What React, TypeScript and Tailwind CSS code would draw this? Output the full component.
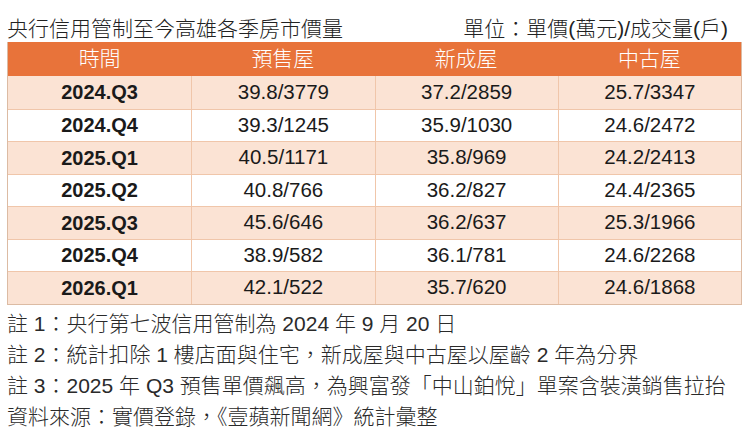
const rows = [
  ['2024.Q3', '39.8/3779', '37.2/2859', '25.7/3347'],
  ['2024.Q4', '39.3/1245', '35.9/1030', '24.6/2472'],
  ['2025.Q1', '40.5/1171', '35.8/969', '24.2/2413'],
  ['2025.Q2', '40.8/766', '36.2/827', '24.4/2365'],
  ['2025.Q3', '45.6/646', '36.2/637', '25.3/1966'],
  ['2025.Q4', '38.9/582', '36.1/781', '24.6/2268'],
  ['2026.Q1', '42.1/522', '35.7/620', '24.6/1868'],
]

const notes = [
  '註 1：央行第七波信用管制為 2024 年 9 月 20 日',
  '註 2：統計扣除 1 樓店面與住宅，新成屋與中古屋以屋齡 2 年為分界',
  '註 3：2025 年 Q3 預售單價飆高，為興富發「中山鉑悅」單案含裝潢銷售拉抬',
  '資料來源：實價登錄，《壹蘋新聞網》統計彙整',
]

export default function App() {
  return (
    <div
      className="w-[750px] h-[442px] bg-white text-[#1a1a1a] pl-[7px] pr-[8px] font-light"
      style={{ fontFamily: '"Liberation Sans", "Noto Sans CJK TC", sans-serif' }}
    >
      {/* title row */}
      <div className="h-[42px] flex items-end justify-between pb-[3px] text-[21px] leading-none text-[#222]">
        <span>央行信用管制至今高雄各季房市價量</span>
        <span className="pr-[14px]">單位：單價(萬元)/成交量(戶)</span>
      </div>

      {/* table */}
      <div className="border-l border-r border-b border-[#dcbba3]">
        <div className="grid grid-cols-4 h-[34px] bg-[#e8733a] text-white text-[21px]">
          {['時間', '預售屋', '新成屋', '中古屋'].map((h) => (
            <div key={h} className="flex items-center justify-center">{h}</div>
          ))}
        </div>
        {rows.map((r, i) => (
          <div
            key={r[0]}
            className={`grid grid-cols-4 h-[32.5px] text-[20.5px] ${i % 2 === 0 ? 'bg-[#fbe3d4]' : 'bg-white'} ${i > 0 ? 'border-t border-[#f0c6aa]' : ''}`}
          >
            {r.map((c, j) => (
              <div
                key={j}
                className={`flex items-center justify-center ${j > 0 ? 'border-l border-[#f0c6aa] font-normal' : 'font-bold text-[20px]'}`}
              >
                {c}
              </div>
            ))}
          </div>
        ))}
      </div>

      {/* notes */}
      <div className="pt-[3px] text-[21px] leading-[31px] text-[#2a2a2a]">
        {notes.map((n) => (
          <div key={n} className="whitespace-nowrap">{n}</div>
        ))}
      </div>
    </div>
  )
}
